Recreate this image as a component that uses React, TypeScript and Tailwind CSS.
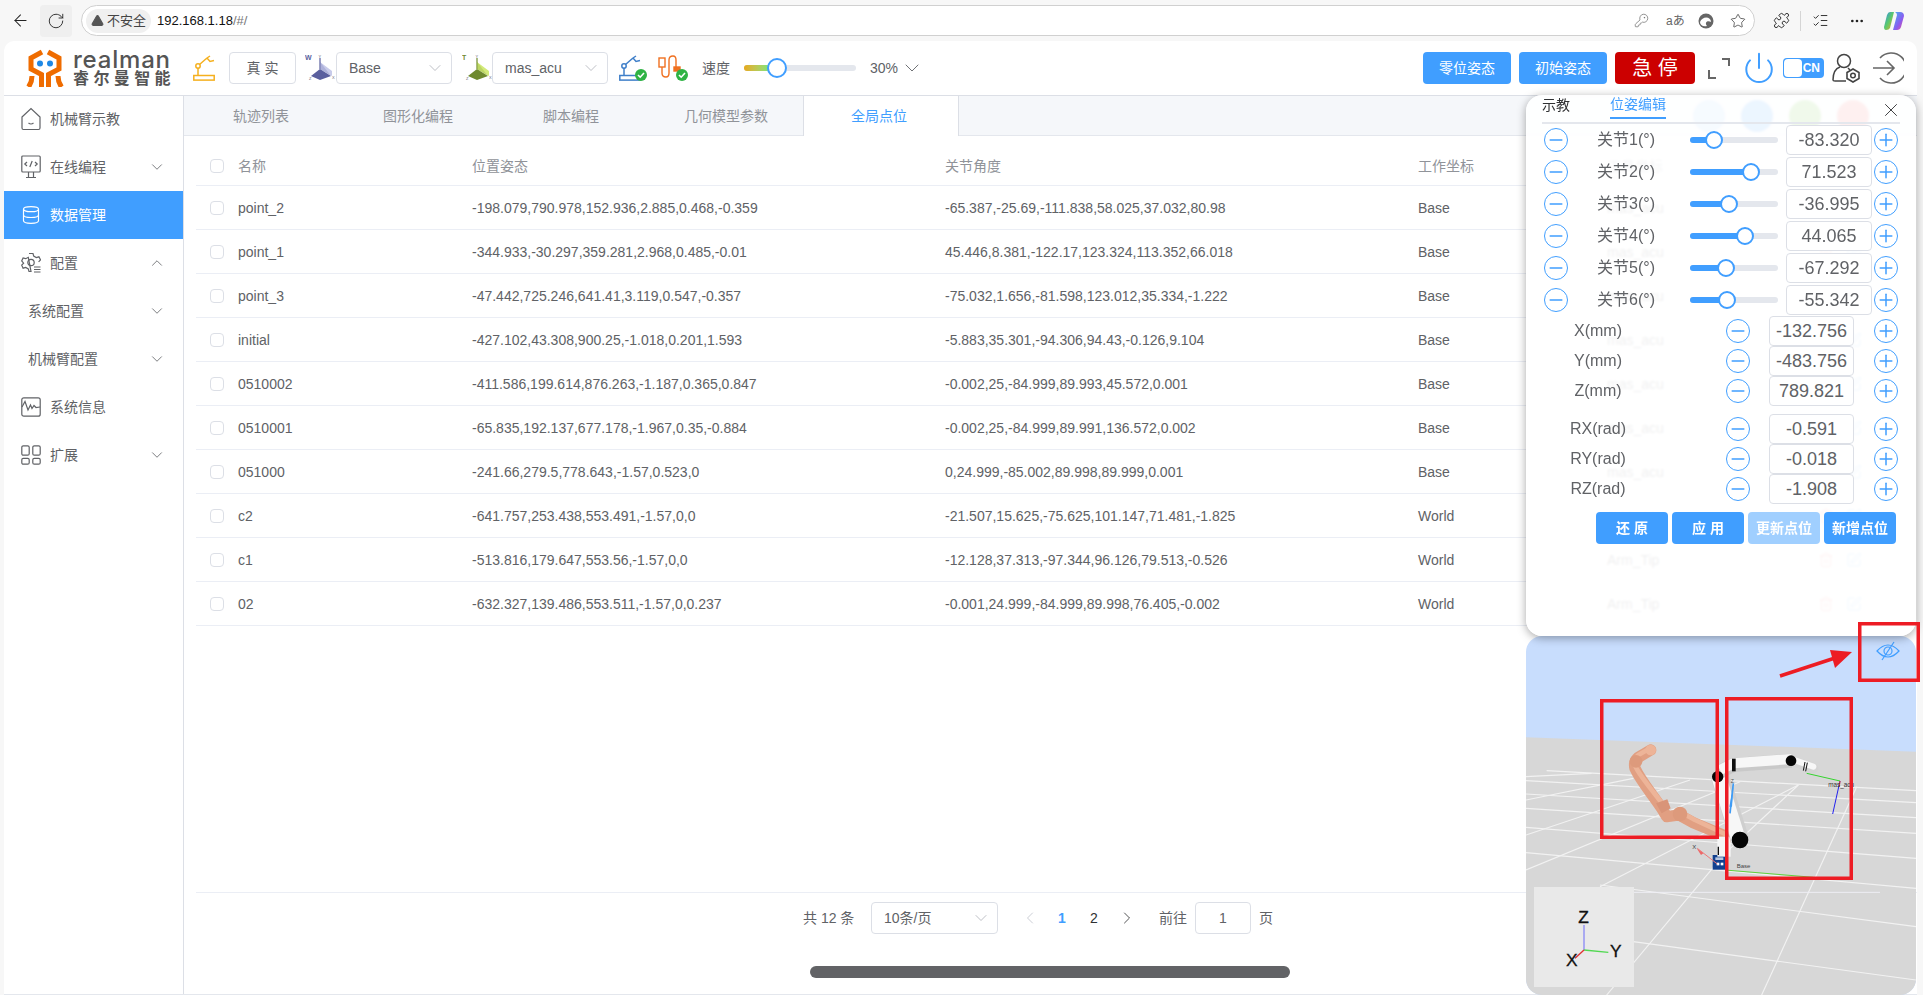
import React from "react";
import { ArrowLeft, RotateCw, KeyRound, Star, Puzzle, ChevronDown, ChevronUp, ChevronLeft, ChevronRight, Database, Power, Minus, Plus, X, Trash2, SquarePen, MoreHorizontal, TriangleAlert, ListChecks } from "lucide-react";

const rows = [
  ["point_2", "-198.079,790.978,152.936,2.885,0.468,-0.359", "-65.387,-25.69,-111.838,58.025,37.032,80.98", "Base", "mas_acu"],
  ["point_1", "-344.933,-30.297,359.281,2.968,0.485,-0.01", "45.446,8.381,-122.17,123.324,113.352,66.018", "Base", "mas_acu"],
  ["point_3", "-47.442,725.246,641.41,3.119,0.547,-0.357", "-75.032,1.656,-81.598,123.012,35.334,-1.222", "Base", "mas_acu"],
  ["initial", "-427.102,43.308,900.25,-1.018,0.201,1.593", "-5.883,35.301,-94.306,94.43,-0.126,9.104", "Base", "mas_acu"],
  ["0510002", "-411.586,199.614,876.263,-1.187,0.365,0.847", "-0.002,25,-84.999,89.993,45.572,0.001", "Base", "mas_acu"],
  ["0510001", "-65.835,192.137,677.178,-1.967,0.35,-0.884", "-0.002,25,-84.999,89.991,136.572,0.002", "Base", "mas_acu"],
  ["051000", "-241.66,279.5,778.643,-1.57,0.523,0", "0,24.999,-85.002,89.998,89.999,0.001", "Base", "mas_acu"],
  ["c2", "-641.757,253.438,553.491,-1.57,0,0", "-21.507,15.625,-75.625,101.147,71.481,-1.825", "World", "mas_acu"],
  ["c1", "-513.816,179.647,553.56,-1.57,0,0", "-12.128,37.313,-97.344,96.126,79.513,-0.526", "World", "Arm_Tip"],
  ["02", "-632.327,139.486,553.511,-1.57,0,0.237", "-0.001,24.999,-84.999,89.998,76.405,-0.002", "World", "Arm_Tip"],
];

const joints = [
  ["关节1(°)", "-83.320", 24],
  ["关节2(°)", "71.523", 61],
  ["关节3(°)", "-36.995", 39],
  ["关节4(°)", "44.065", 55],
  ["关节5(°)", "-67.292", 36],
  ["关节6(°)", "-55.342", 37],
] as const;

const RoundBtn = ({ plus }: { plus?: boolean }) => (
  <div className="w-6 h-6 rounded-full border-[1.5px] border-[#409eff] flex items-center justify-center text-[#409eff] shrink-0">
    {plus ? <Plus size={20} strokeWidth={1.8} /> : <Minus size={20} strokeWidth={1.8} />}
  </div>
);

const Check = () => <div className="w-3.5 h-3.5 border border-[#dcdfe6] rounded-sm bg-white shrink-0" />;

const HomeIcon = () => (
  <svg width="20" height="24" viewBox="0 0 20 24" fill="none" stroke="#606266" strokeWidth="1.2">
    <path d="M1 10 L10 1.5 L19 10 V21 a1.5 1.5 0 0 1 -1.5 1.5 H2.5 A1.5 1.5 0 0 1 1 21 Z" />
    <path d="M7.5 16 q2.5 2 5 0" />
  </svg>
);
const CodeIcon = () => (
  <svg width="20" height="24" viewBox="0 0 20 24" fill="none" stroke="#606266" strokeWidth="1.2">
    <rect x="0.8" y="1" width="18.4" height="16" rx="1" />
    <path d="M6 7 L3.8 9 L6 11 M14 7 L16.2 9 L14 11 M11.2 6 L8.8 12 M7.5 17 V22 M12.5 17 V22 M5 22.5 H15" />
  </svg>
);
const GearIcon = () => (
  <svg width="20" height="22" viewBox="0 0 20 22" fill="none" stroke="#606266" strokeWidth="1.2">
    <path d="M8 1.5 h4 l.7 2.6 2.6 1.4 2.6-.7 1.6 3 -1.9 2 M10 19.5 H8 l-.7-2.6 -2.6-1.4 -2.6.7 -1.4-3 1.9-2 -1.9-2.2 1.4-3 2.6.7 2.6-1.4 Z" />
    <circle cx="10" cy="10.5" r="3.2" />
    <path d="M13 15 H19.5 M13 17.5 H19.5 M13 20 H19.5" />
  </svg>
);
const WaveIcon = () => (
  <svg width="20" height="20" viewBox="0 0 20 20" fill="none" stroke="#606266" strokeWidth="1.2">
    <rect x="0.8" y="0.8" width="18.4" height="18.4" rx="2" />
    <path d="M1 10 L4 4.5 L7 13 L9.5 8 L11 11.5 L13 8.5 L15 10.5 L19 10" />
  </svg>
);
const GridIcon = () => (
  <svg width="20" height="20" viewBox="0 0 20 20" fill="none" stroke="#606266" strokeWidth="1.2">
    <rect x="0.8" y="0.8" width="7.4" height="9.4" rx="1.5" />
    <rect x="11.8" y="0.8" width="7.4" height="9.4" rx="1.5" />
    <rect x="0.8" y="13.3" width="7.4" height="5.9" rx="1.5" />
    <rect x="11.8" y="13.3" width="7.4" height="5.9" rx="1.5" />
  </svg>
);

const ArmIcon = ({ color }: { color: string }) => (
  <svg width="22" height="26" viewBox="0 0 22 26" fill="none" stroke={color} strokeWidth="1.5">
    <rect x="0.8" y="20.5" width="20.4" height="4.6" />
    <path d="M5 20 V13" />
    <circle cx="5" cy="11" r="2.2" />
    <path d="M6.5 9.5 L14 3 M14 3 L17 1 M14 3 L17 6.5 L21 5.5" />
  </svg>
);

const OkBadge = () => (
  <svg width="12" height="12" viewBox="0 0 12 12" className="absolute -right-0.5 bottom-0">
    <circle cx="6" cy="6" r="6" fill="#2fb344" />
    <path d="M3 6 L5.2 8.2 L9 4" fill="none" stroke="#fff" strokeWidth="1.6" />
  </svg>
);

const AxisIcon = ({ letter, a, b, c }: { letter: string; a: string; b: string; c: string }) => (
  <svg width="30" height="30" viewBox="0 0 30 30">
    <text x="0" y="7" fontSize="7" fontWeight="700" fill={a} fontFamily="Liberation Sans">{letter}</text>
    <polygon points="15,9 27,18 27,23 15,16" fill={b} />
    <polygon points="15,16 6,23 15,27 26,23" fill={a} />
    <path d="M15 5 V16" stroke={a} strokeWidth="1.2" />
    <text x="13.5" y="5" fontSize="4" fill="#667" fontFamily="Liberation Sans">Y</text>
    <text x="4" y="27" fontSize="4" fill="#667" fontFamily="Liberation Sans">Z</text>
    <text x="27" y="26" fontSize="4" fill="#667" fontFamily="Liberation Sans">X</text>
    <polygon points="15,9 15,16 26,23" fill={c} opacity="0.5" />
  </svg>
);

const Select = ({ text, w, cls }: { text: string; w: string; cls?: string }) => (
  <div className={`${w} ${cls ?? ""} h-8 border border-[#dcdfe6] rounded flex items-center justify-between pl-3 pr-1.5 text-sm text-[#606266] shrink-0`}>
    <span>{text}</span>
    <ChevronDown size={20} strokeWidth={0.9} className="text-[#a8abb2]" />
  </div>
);

const NavItem = ({ icon, text, chevron, active, sub }: { icon?: React.ReactNode; text: string; chevron?: "down" | "up"; active?: boolean; sub?: boolean }) => (
  <div className={`h-12 flex items-center text-sm ${active ? "bg-[#409eff] text-white" : "text-[#606266]"} ${sub ? "pl-6" : "pl-[17px]"}`}>
    {icon && <span className="w-[29px] flex items-center shrink-0">{icon}</span>}
    <span>{text}</span>
    {chevron === "down" && <ChevronDown size={18} strokeWidth={1.1} className="ml-auto mr-[17px]" />}
    {chevron === "up" && <ChevronUp size={18} strokeWidth={1.1} className="ml-auto mr-[17px]" />}
  </div>
);

const Scene = () => (
  <svg viewBox="18 -12 1170 1077" className="w-full h-full block" preserveAspectRatio="none">
    <rect x="18" y="-12" width="1170" height="1077" fill="#c8ddfd" />
    <polygon points="18,292 1188,335 1188,1065 18,1065" fill="#d7d7d7" />
    <g stroke="#f2f2f2" strokeWidth="3.5" fill="none">
      <path d="M80 392 L1188 452" />
      <path d="M18 422 L1188 488" />
      <path d="M18 462 L1188 533" />
      <path d="M18 505 L1188 580" />
      <path d="M18 562 L1188 655" />
      <path d="M18 638 L1188 745" />
      <path d="M240 735 L1188 860" />
      <path d="M340 905 L1188 1020" />
      <path d="M18 410 L215 400" />
      <path d="M18 480 L340 415" />
      <path d="M18 585 L510 420" />
      <path d="M18 690 L660 425" />
      <path d="M240 740 L835 435" />
      <path d="M260 1065 L615 640 L835 435" />
      <path d="M725 1065 L1010 440" />
    </g>
    <path d="M100 757 H1080" stroke="#eeeef5" strokeWidth="3" />
    <path d="M392 330 L355 352 Q340 365 345 385 C360 420 395 460 425 505 L440 530 L478 525 L520 548 L625 592" fill="none" stroke="#e19f82" strokeWidth="34" strokeLinejoin="round" strokeLinecap="round" />
    <path d="M385 328 L355 345 Q335 365 352 390 C370 420 400 455 430 495 M480 515 L525 540 L615 582" fill="none" stroke="#edb498" strokeWidth="14" strokeLinejoin="round" strokeLinecap="round" />
    <circle cx="480" cy="522" r="22" fill="#dd9a7c" />
    <path d="M408 490 L442 478 L452 505 L425 520 Z" fill="#d99478" />
    <circle cx="348" cy="364" r="19" fill="#dd9a7c" />
    <circle cx="392" cy="330" r="16" fill="#edb498" />

    <rect x="578" y="645" width="38" height="44" fill="#12408f" />
    <rect x="586" y="652" width="24" height="8" fill="#fff" opacity="0.7" />
    <rect x="590" y="668" width="8" height="8" fill="#fff" />
    <rect x="602" y="668" width="8" height="8" fill="#fff" />
    <rect x="592" y="590" width="40" height="60" fill="#f5f5f5" />
    <path d="M595 620 V645" stroke="#111" strokeWidth="4" />
    <path d="M660 600 L600 410" stroke="#cfcfcf" strokeWidth="56" />
    <path d="M656 600 L596 410" stroke="#f7f7f7" strokeWidth="44" />
    <path d="M600 395 L640 375 L815 362" fill="none" stroke="#c9c9c9" strokeWidth="42" strokeLinejoin="round" />
    <path d="M600 390 L640 370 L815 357" fill="none" stroke="#f7f7f7" strokeWidth="30" strokeLinejoin="round" />
    <path d="M815 362 L880 385" stroke="#d4d4d4" strokeWidth="30" strokeLinecap="round" />
    <path d="M817 358 L880 380" stroke="#f7f7f7" strokeWidth="18" strokeLinecap="round" />
    <rect x="636" y="356" width="11" height="38" fill="#111" />
    <path d="M855 366 L850 392 M862 368 L857 394" stroke="#111" strokeWidth="3" />
    <circle cx="593" cy="410" r="17" fill="#050505" />
    <circle cx="813" cy="362" r="16" fill="#050505" />
    <circle cx="660" cy="600" r="25" fill="#050505" />

    <path d="M630 520 L640 430" stroke="#3f9cf5" strokeWidth="5" />
    <polygon points="640,440 628,500 636,500" fill="#3f9cf5" />
    <text x="632" y="428" fontSize="15" fill="#555" fontFamily="Liberation Sans">Z</text>
    <path d="M592 672 L532 625" stroke="#ee7777" strokeWidth="3" />
    <polygon points="530,625 550,640 543,645" fill="#ee6666" />
    <text x="517" y="626" fontSize="18" fill="#444" fontFamily="Liberation Sans">X</text>
    <path d="M615 690 L880 712" stroke="#5fd13a" strokeWidth="3" />
    <text x="650" y="685" fontSize="18" fill="#444" fontFamily="Liberation Sans">Base</text>
    <path d="M860 400 L960 423" stroke="#35d42f" strokeWidth="3" />
    <path d="M960 423 L938 522" stroke="#2222ee" strokeWidth="3" />
    <path d="M960 423 L958 440" stroke="#e33" strokeWidth="3" />
    <text x="925" y="440" fontSize="19" fill="#333" fontFamily="Liberation Sans">mas_acu</text>

    <rect x="42" y="741" width="300" height="300" fill="#e9e9e9" />
    <path d="M192 930 V855" stroke="#8a8af5" strokeWidth="4" />
    <path d="M192 930 L265 937" stroke="#52d852" strokeWidth="4" />
    <path d="M192 930 L165 955" stroke="#e03030" strokeWidth="4" />
    <text x="175" y="848" fontSize="52" fill="#111" stroke="#111" strokeWidth="1" fontFamily="Liberation Sans">Z</text>
    <text x="270" y="952" fontSize="52" fill="#111" stroke="#111" strokeWidth="1" fontFamily="Liberation Sans">Y</text>
    <text x="138" y="978" fontSize="52" fill="#111" stroke="#111" strokeWidth="1" fontFamily="Liberation Sans">X</text>
  </svg>
);

export default function App() {
  return (
    <div className="relative w-[1923px] h-[995px] overflow-hidden bg-[#f7f7f7] flex flex-col [font-family:'Liberation_Sans','Noto_Sans_CJK_SC',sans-serif]">
      {/* browser chrome */}
      <div className="h-[41px] shrink-0 flex items-center relative">
        <ArrowLeft size={19} strokeWidth={1.3} className="ml-[11px] text-[#222]" />
        <div className="ml-[10px] w-8 h-8 flex items-center justify-center bg-[#efefef] rounded">
          <RotateCw size={18} strokeWidth={1.2} className="text-[#222]" />
        </div>
        <div className="ml-[9px] w-[1674px] h-[31px] bg-white border border-[#d0d0d0] rounded-full flex items-center pl-[4px]">
          <div className="w-[65px] h-[24px] rounded-full bg-[#f0f0f0] flex items-center pl-[5px] text-[13px] text-[#444] gap-[3px]">
            <TriangleAlert size={13} fill="#555" stroke="#555" className="shrink-0" />
            <span className="whitespace-nowrap">不安全</span>
          </div>
          <span className="ml-[6px] text-[13px] text-[#111]">192.168.1.18<span className="text-[#777]">/#/</span></span>
          <div className="ml-auto flex items-center mr-[8px] text-[#666]">
            <KeyRound size={15} strokeWidth={1.1} />
            <span className="ml-[17px] w-[15px] text-[12px] whitespace-nowrap">aあ</span>
            <svg width="16" height="16" viewBox="0 0 16 16" className="ml-[17px]">
              <circle cx="8" cy="8" r="7.5" fill="#666" />
              <path d="M2 9 C4 3 13 3 13 9 C10 7 6 9 9 13 C5 14 2 12 2 9 Z" fill="#fff" />
            </svg>
            <Star size={16} strokeWidth={1.1} className="ml-[16px] text-[#333]" />
          </div>
        </div>
        <Puzzle size={17} strokeWidth={1.3} className="ml-[18px] text-[#222]" />
        <div className="ml-[10px] w-px h-5 bg-[#d5d5d5]" />
        <ListChecks size={17} strokeWidth={1.3} className="ml-[11px] text-[#222]" />
        <MoreHorizontal size={16} className="ml-[20px] text-[#222]" />
        <svg width="22" height="22" viewBox="0 0 22 22" className="ml-[18px]">
          <defs>
            <linearGradient id="cp1" x1="0" y1="0" x2="1" y2="1">
              <stop offset="0" stopColor="#2f8ff0" />
              <stop offset="0.5" stopColor="#5cc96b" />
              <stop offset="1" stopColor="#f5a623" />
            </linearGradient>
            <linearGradient id="cp2" x1="0" y1="0" x2="1" y2="1">
              <stop offset="0" stopColor="#3fb6f0" />
              <stop offset="0.6" stopColor="#8a5cf0" />
              <stop offset="1" stopColor="#f04f8a" />
            </linearGradient>
          </defs>
          <path d="M7 2 H11 L7 18 Q6 20 3 20 Q1 20 1 17 L4 5 Q5 2 7 2 Z" fill="url(#cp1)" />
          <path d="M12 2 H17 Q21 2 21 6 L18 17 Q17 20 14 20 H10 L14 5 Q14 3 12 2 Z" fill="url(#cp2)" />
        </svg>
      </div>

      {/* card */}
      <div className="flex-1 ml-1 mr-[6px] bg-white rounded-t-[10px] flex flex-col min-h-0 border-b border-[#e4e7ed]">
        {/* header */}
        <header className="h-[55px] shrink-0 flex items-center border-b border-[#dcdfe6] pr-[13px]">
          <svg width="38" height="38" viewBox="0 0 38 38" className="ml-[22px] shrink-0" fill="none" stroke="#ef6c00" strokeWidth="5">
            <path d="M16 3 L5 9 V20 L15.5 25.5 V38" />
            <path d="M22 3 L33 9 V20 L22.5 25.5 V38" />
            <path d="M6 27 Q6 33 2.5 38" />
            <path d="M32 27 Q32 33 35.5 38" />
            <circle cx="14" cy="14.5" r="3" fill="#1e88e5" stroke="none" />
            <circle cx="24" cy="14.5" r="3" fill="#1e88e5" stroke="none" />
          </svg>
          <div className="ml-[9px] w-[98px] shrink-0 flex flex-col text-[#555] leading-none">
            <span className="text-[24px] font-medium tracking-[0.8px] leading-[19px] [font-family:Inter,sans-serif]">realman</span>
            <span className="mt-[2px] text-[16px] font-bold tracking-[4.4px] whitespace-nowrap">睿尔曼智能</span>
          </div>
          <span className="ml-[22px] shrink-0"><ArmIcon color="#f5b01e" /></span>
          <div className="ml-[14px] w-[67px] h-8 shrink-0 border border-[#dcdfe6] rounded flex items-center justify-center text-sm text-[#606266]">真 实</div>
          <span className="ml-[9px] shrink-0"><AxisIcon letter="W" a="#5a5f9e" b="#c8cbea" c="#9397c9" /></span>
          <Select text="Base" w="w-[116px]" cls="ml-px" />
          <span className="ml-[10px] shrink-0"><AxisIcon letter="T" a="#6f8a2e" b="#d3ea7a" c="#a6c24e" /></span>
          <Select text="mas_acu" w="w-[116px]" />
          <span className="ml-[11px] w-[26px] relative shrink-0 block">
            <ArmIcon color="#3f7fc9" />
            <OkBadge />
          </span>
          <span className="ml-[13px] w-[28px] h-[26px] relative shrink-0 block">
            <svg width="24" height="24" viewBox="0 0 24 24" fill="none" stroke="#f07020" strokeWidth="1.4">
              <rect x="1" y="3" width="6" height="9" />
              <path d="M4 12 V18 Q4 22 8 22 Q11 22 11 18 V5 Q11 1 15 1 Q18 1 18 5 V12" />
              <rect x="16" y="12" width="6" height="4" fill="#f07020" />
            </svg>
            <OkBadge />
          </span>
          <span className="ml-4 w-7 text-sm text-[#606266] shrink-0 whitespace-nowrap">速度</span>
          <div className="ml-[14px] w-[112px] h-1.5 rounded-full bg-[#e4e7ed] relative shrink-0">
            <div className="h-full w-[26px] rounded-full bg-gradient-to-r from-[#e6a817] to-[#72e67c]" />
            <div className="absolute left-[23px] top-[-7px] w-5 h-5 rounded-full bg-white border-2 border-[#409eff]" />
          </div>
          <span className="ml-[14px] w-[27px] text-sm text-[#606266] shrink-0">30%</span>
          <ChevronDown size={24} strokeWidth={0.9} className="ml-[3px] text-[#606266] shrink-0" />

          <div className="ml-auto flex items-center shrink-0">
            <div className="w-[88px] h-8 rounded bg-[#409eff] text-white text-sm flex items-center justify-center">零位姿态</div>
            <div className="ml-2 w-[88px] h-8 rounded bg-[#409eff] text-white text-sm flex items-center justify-center">初始姿态</div>
            <div className="ml-2 w-20 h-8 rounded bg-[#cc0000] text-white text-[20px] flex items-center justify-center">急 停</div>
            <svg width="22" height="22" viewBox="0 0 22 22" fill="none" stroke="#666" strokeWidth="2" className="ml-[13px]">
              <path d="M14 2 H21 V9 M1 13 V21 H8" />
            </svg>
            <Power size={34} strokeWidth={1.4} className="ml-3 text-[#409eff]" />
            <div className="ml-[7px] w-[41px] h-5 rounded-sm bg-[#409eff] flex items-center pl-px pr-1 justify-between">
              <div className="w-[18px] h-[18px] bg-white rounded-sm" />
              <span className="text-white text-[12px] font-bold leading-none">CN</span>
            </div>
            <svg width="28" height="30" viewBox="0 0 28 30" fill="none" stroke="#444" strokeWidth="1.5" className="ml-2">
              <circle cx="12" cy="8" r="6.5" />
              <path d="M8 14 C2 16 1 22 1 27 Q1 28 3 28 H14 M16 15 L18 17" />
              <path d="M21 16 L27 19.5 V25.5 L21 29 L15 25.5 V19.5 Z" strokeWidth="1.6" />
              <circle cx="21" cy="22.5" r="2.3" />
            </svg>
            <svg width="32" height="32" viewBox="0 0 32 32" fill="none" stroke="#666" strokeWidth="1.6" className="ml-3">
              <path d="M8 6 A15 15 0 1 1 8 26" />
              <path d="M1 16 H22 M15 9 L22 16 L15 23" />
            </svg>
          </div>
        </header>

        <div className="flex-1 flex min-h-0">
          {/* sidebar */}
          <aside className="w-[180px] shrink-0 border-r border-[#dcdfe6]">
            <div className="-mt-px flex flex-col">
              <NavItem icon={<HomeIcon />} text="机械臂示教" />
              <NavItem icon={<CodeIcon />} text="在线编程" chevron="down" />
              <NavItem icon={<Database size={20} strokeWidth={1.4} />} text="数据管理" active />
              <NavItem icon={<GearIcon />} text="配置" chevron="up" />
              <NavItem text="系统配置" chevron="down" sub />
              <NavItem text="机械臂配置" chevron="down" sub />
              <NavItem icon={<WaveIcon />} text="系统信息" />
              <NavItem icon={<GridIcon />} text="扩展" chevron="down" />
            </div>
          </aside>

          {/* main */}
          <main className="flex-1 min-w-0 flex flex-col">
            <div className="h-[40px] shrink-0 bg-[#f5f7fa] border-b border-[#e4e7ed] flex text-sm text-[#909399]">
              <div className="w-[154px] flex items-center justify-center">轨迹列表</div>
              <div className="w-[160px] flex items-center justify-center">图形化编程</div>
              <div className="w-[146px] flex items-center justify-center">脚本编程</div>
              <div className="w-[159px] flex items-center justify-center pl-[5px]">几何模型参数</div>
              <div className="w-[156px] h-[40px] bg-white border-x border-[#dcdfe6] flex items-center justify-center pr-1 text-[#409eff]">全局点位</div>
              <div className="ml-auto mr-[48px] flex items-center gap-4">
                <div className="w-8 h-8 rounded-full bg-[#a0cfff]" />
                <div className="w-8 h-8 rounded-full bg-[#409eff]" />
                <div className="w-8 h-8 rounded-full bg-[#67c23a]" />
                <div className="w-8 h-8 rounded-full bg-[#f56c6c]" />
              </div>
            </div>

            <div className="ml-3 mt-[10px] mr-3 text-sm text-[#606266]">
              <div className="h-10 flex items-center border-b border-[#ebeef5] text-[#909399]">
                <span className="w-[42px] pl-[14px] shrink-0"><Check /></span>
                <span className="w-[234px] shrink-0">名称</span>
                <span className="w-[473px] shrink-0">位置姿态</span>
                <span className="w-[473px] shrink-0">关节角度</span>
                <span className="w-[189px] shrink-0">工作坐标</span>
                <span className="w-[211px] shrink-0">工具坐标</span>
                <span>操作</span>
              </div>
              {rows.map((r) => (
                <div key={r[0]} className="h-11 flex items-center border-b border-[#ebeef5]">
                  <span className="w-[42px] pl-[14px] shrink-0"><Check /></span>
                  <span className="w-[234px] shrink-0">{r[0]}</span>
                  <span className="w-[473px] shrink-0">{r[1]}</span>
                  <span className="w-[473px] shrink-0">{r[2]}</span>
                  <span className="w-[189px] shrink-0">{r[3]}</span>
                  <span className="w-[211px] shrink-0">{r[4]}</span>
                  <Trash2 size={16} strokeWidth={1.3} className="text-[#f56c6c]" />
                  <SquarePen size={16} strokeWidth={1.3} className="ml-3 text-[#409eff]" />
                </div>
              ))}
            </div>

            <div className="mt-auto border-t border-[#ebeef5] ml-3 h-[102px] shrink-0">
              <div className="mt-[9px] pl-[607px] flex items-center h-[31px] text-sm text-[#606266]">
                <span className="w-[52px] whitespace-nowrap">共 12 条</span>
                <Select text="10条/页" w="w-[127px]" cls="ml-4" />
                <ChevronLeft size={20} strokeWidth={1} className="ml-[22px] text-[#c0c4cc]" />
                <span className="ml-[6px] w-8 text-center text-[#409eff] font-bold">1</span>
                <span className="w-8 text-center text-[#303133]">2</span>
                <ChevronRight size={20} strokeWidth={1} className="ml-[7px] text-[#303133]" />
                <span className="ml-[22px] w-7 whitespace-nowrap">前往</span>
                <div className="ml-2 w-14 h-8 border border-[#dcdfe6] rounded flex items-center justify-center">1</div>
                <span className="ml-[8px]">页</span>
              </div>
              <div className="mt-[33px] ml-[614px] w-[480px] h-3 rounded-full bg-[#626366]" />
            </div>
          </main>
        </div>
      </div>

      {/* 3D view */}
      <div className="absolute left-[1526px] top-[636px] w-[390px] h-[359px] rounded-[16px] overflow-hidden">
        <Scene />
        <svg width="24" height="20" viewBox="0 0 24 20" fill="none" stroke="#409eff" strokeWidth="1.2" className="absolute right-[16px] top-[5px]">
          <path d="M1 10 Q12 -2 23 10 Q12 22 1 10 Z" />
          <circle cx="12" cy="10" r="4" />
          <path d="M6 19 L18 1" />
        </svg>
      </div>

      {/* floating pose panel */}
      <div className="absolute left-[1526px] top-[95px] w-[390px] h-[541px] rounded-[16px] bg-white/90 backdrop-blur-[1px] shadow-[0_2px_10px_rgba(0,0,0,0.35)] flex flex-col">
        <div className="relative h-[29px] mx-4 shrink-0 flex text-sm border-b-2 border-[#e4e7ed]">
          <span className="h-[21px] w-[28px] text-[#303133] pt-[2px] leading-[17px] whitespace-nowrap">示教</span>
          <span className="ml-[40px] h-[21px] w-14 text-[#409eff] pt-[1px] leading-[17px] whitespace-nowrap border-b-2 border-[#409eff] box-content">位姿编辑</span>
        </div>
        <X size={22} strokeWidth={1} className="absolute left-[354px] top-[4px] text-[#303133]" />

        {joints.map(([label, value, pos]) => (
          <div key={label} className="h-8 shrink-0 flex items-center pl-[18px]">
            <RoundBtn />
            <span className="ml-[29px] w-[93px] text-base text-[#606266] whitespace-nowrap">{label}</span>
            <div className="w-[88px] h-1.5 bg-[#e4e7ed] rounded-full relative">
              <div className="h-full bg-[#409eff] rounded-full" style={{ width: pos }} />
              <div className="absolute top-[-6px] w-[18px] h-[18px] rounded-full bg-white border-2 border-[#409eff]" style={{ left: pos - 9 }} />
            </div>
            <div className="ml-2 w-[86px] h-[30px] border border-[#dcdfe6] rounded bg-white flex items-center justify-center text-[18px] text-[#606266]">{value}</div>
            <span className="ml-0.5"><RoundBtn plus /></span>
          </div>
        ))}
        {[["X(mm)", "-132.756"], ["Y(mm)", "-483.756"], ["Z(mm)", "789.821"]].map(([l, v]) => (
          <div key={l} className="h-[30px] shrink-0 flex items-center pl-8">
            <span className="w-20 text-center text-base text-[#606266]">{l}</span>
            <span className="ml-[88px]"><RoundBtn /></span>
            <div className="ml-[19px] w-[85px] h-[30px] border border-[#dcdfe6] rounded bg-white flex items-center justify-center text-[18px] text-[#606266]">{v}</div>
            <span className="ml-5"><RoundBtn plus /></span>
          </div>
        ))}
        <div className="h-2 shrink-0" />
        {[["RX(rad)", "-0.591"], ["RY(rad)", "-0.018"], ["RZ(rad)", "-1.908"]].map(([l, v]) => (
          <div key={l} className="h-[30px] shrink-0 flex items-center pl-8">
            <span className="w-20 text-center text-base text-[#606266]">{l}</span>
            <span className="ml-[88px]"><RoundBtn /></span>
            <div className="ml-[19px] w-[85px] h-[30px] border border-[#dcdfe6] rounded bg-white flex items-center justify-center text-[18px] text-[#606266]">{v}</div>
            <span className="ml-5"><RoundBtn plus /></span>
          </div>
        ))}
        <div className="mt-2 pl-[70px] flex gap-1 text-sm text-white font-bold">
          <div className="w-[72px] h-8 rounded bg-[#409eff] flex items-center justify-center">还 原</div>
          <div className="w-[72px] h-8 rounded bg-[#409eff] flex items-center justify-center">应 用</div>
          <div className="w-[72px] h-8 rounded bg-[#a0cfff] flex items-center justify-center">更新点位</div>
          <div className="w-[72px] h-8 rounded bg-[#409eff] flex items-center justify-center">新增点位</div>
        </div>
      </div>

      {/* red annotations drawn on top of the screenshot */}
      <svg width="1923" height="995" className="absolute inset-0 pointer-events-none" fill="none" stroke="#ed1c24" strokeWidth="3.5">
        <rect x="1601.75" y="700.75" width="115.5" height="136.5" />
        <rect x="1726.75" y="698.75" width="124.5" height="179.5" />
        <rect x="1859.75" y="623.75" width="58.5" height="56.5" />
        <path d="M1780 676 L1838 657" />
        <polygon points="1852,652 1830,650 1835,668" fill="#ed1c24" stroke="none" />
      </svg>
    </div>
  );
}
